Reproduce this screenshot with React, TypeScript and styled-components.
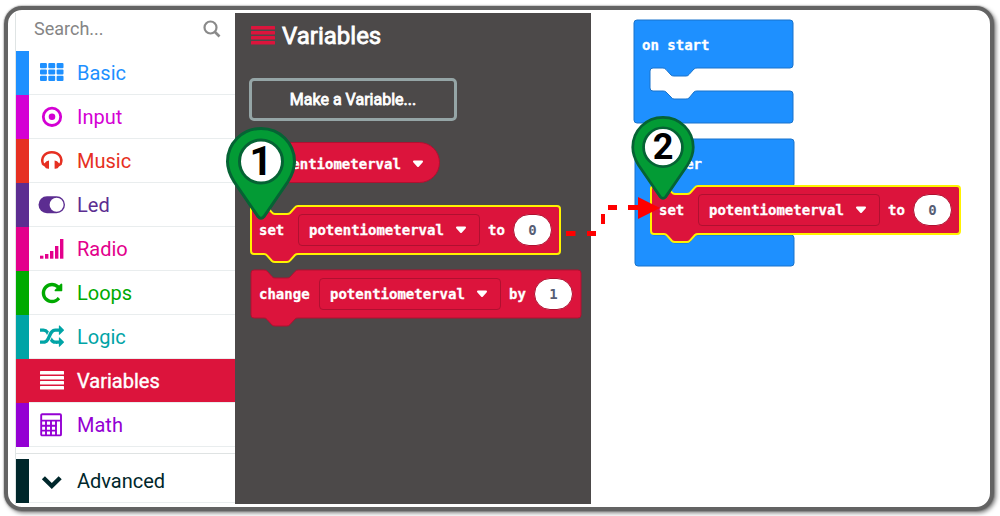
import React from "react";
import styled, { createGlobalStyle } from "styled-components";

const RED = "#dc143c";
const RED_DARK = "#b01030";
const BLUE = "#1e90ff";
const BLUE_DARK = "#1873cc";
const YELLOW = "#fff200";
const SANS = 'Roboto, "Liberation Sans", sans-serif';
const MONO = '"DejaVu Sans Mono", "Liberation Mono", monospace';

const GlobalStyle = createGlobalStyle`
  *, *::before, *::after { box-sizing: border-box; }
  body { margin: 0; background: #fff; font-family: ${SANS}; }
  button, input, select { font: inherit; margin: 0; }
`;

const Page = styled.div`
  padding: 6px 6px 5px 4px;
  min-height: 100vh;
  display: flex;
`;

const Frame = styled.div`
  position: relative;
  flex: 1;
  display: flex;
  padding: 3px 3px 3px 7px;
  border: 4px solid #636363;
  border-radius: 18px;
  background: #fff;
  box-shadow: 2px 2px 4px rgba(0, 0, 0, 0.5), 0 0 1px 1px rgba(0, 0, 0, 0.15);
`;

const Sidebar = styled.nav`
  flex: none;
  width: 220px;
  border-left: 1px solid #dfe4e4;
`;

const SearchRow = styled.label`
  display: flex;
  align-items: center;
  height: 38px;
  padding: 0 14px 7px 18px;
`;

const SearchInput = styled.input`
  flex: 1;
  min-width: 0;
  padding: 0;
  border: 0;
  outline: 0;
  background: transparent;
  font-size: 18px;
  color: #555;
  &::placeholder { color: #858585; opacity: 1; }
`;

const CategoryList = styled.ul`
  list-style: none;
  margin: 0;
  padding: 0;
`;

const AdvancedList = styled(CategoryList)`
  margin-top: 6px;
  padding-top: 5px;
  border-top: 1px solid #dfe3e3;
`;

const CategoryButton = styled.button<{ $color: string; $active?: boolean }>`
  display: flex;
  align-items: center;
  gap: 13px;
  width: 100%;
  height: 44px;
  padding: 0 0 0 11px;
  border: 0;
  border-left: 13px solid ${(p) => p.$color};
  background: ${(p) => (p.$active ? p.$color : "#fff")};
  box-shadow: inset 0 -1px 0 #e9edee;
  color: ${(p) => (p.$active ? "#fff" : p.$color)};
  font-size: 20px;
  line-height: 24px;
  text-align: left;
  -webkit-text-stroke: ${(p) => (p.$active ? "0.4px #fff" : "0")};
`;

const Icon = styled.svg`
  flex: none;
  width: 24px;
  height: 24px;
  overflow: visible;
`;

const Flyout = styled.section`
  flex: none;
  width: 356px;
  padding: 9px 0 0 14px;
  background: #4c4949;
`;

const FlyoutTitle = styled.h1`
  display: flex;
  align-items: center;
  gap: 7px;
  margin: 0 0 28px;
  padding-left: 2px;
  font-size: 24px;
  line-height: 28px;
  font-weight: 400;
  -webkit-text-stroke: 0.8px #fff;
  color: #fff;
`;

const MakeButton = styled.button`
  display: block;
  width: 208px;
  height: 43px;
  margin-bottom: 21px;
  padding: 0;
  border: 3px solid #95a5a6;
  border-radius: 5px;
  background: transparent;
  color: #fff;
  font-size: 16px;
  -webkit-text-stroke: 0.8px #fff;
`;

const Stack = styled.div`
  display: flex;
  flex-direction: column;
  align-items: flex-start;
  padding-left: 2px;
`;

const Reporter = styled.div`
  width: 189px;
  height: 41px;
  margin-bottom: 23px;
  border: 1px solid ${RED_DARK};
  border-radius: 21px;
  background: ${RED};
`;

const BlockRoot = styled.div`
  position: relative;
  display: flex;
  align-items: center;
  gap: 8px;
  height: 48px;
  padding: 0 8px;
  margin-bottom: 16px;
  font: bold 14px ${MONO};
  color: #fff;
  -webkit-text-stroke: 0.3px #fff;
`;

const Shape = styled.svg`
  position: absolute;
  left: 0;
  top: 0;
  overflow: visible;
`;

const Word = styled.span<{ $width: number }>`
  position: relative;
  width: ${(p) => p.$width}px;
  white-space: nowrap;
`;

const FieldBox = styled.label<{ $plain?: boolean }>`
  position: relative;
  display: block;
  width: ${(p) => (p.$plain ? "187px" : "182px")};
  height: ${(p) => (p.$plain ? "41px" : "32px")};
  border: ${(p) => (p.$plain ? "0" : `1px solid ${RED_DARK}`)};
  border-radius: 4px;
`;

const FieldSelect = styled.select<{ $plain?: boolean }>`
  appearance: none;
  width: 100%;
  height: 100%;
  padding: 0 0 0 ${(p) => (p.$plain ? 14 : 10)}px;
  border: 0;
  outline: 0;
  background: transparent;
  font: bold 14px ${MONO};
  color: #fff;
  -webkit-text-stroke: 0.3px #fff;
`;

const Caret = styled.svg<{ $plain?: boolean }>`
  position: absolute;
  right: ${(p) => (p.$plain ? 15 : 12)}px;
  top: calc(50% - 4px);
  pointer-events: none;
`;

const NumberInput = styled.input`
  position: relative;
  width: 39px;
  height: 32px;
  padding: 0;
  border: 1px solid ${RED_DARK};
  border-radius: 16px;
  background: #fff;
  color: #575e75;
  font: bold 14px ${MONO};
  -webkit-text-stroke: 0;
  text-align: center;
`;

const Workspace = styled.main`
  position: relative;
  flex: 1;
  min-width: 0;
  min-height: 491px;
`;

const Placed = styled.div<{ $x: number; $y: number }>`
  position: absolute;
  left: ${(p) => p.$x}px;
  top: ${(p) => p.$y}px;
`;

const EventTitle = styled.span`
  position: absolute;
  left: 8px;
  top: 15px;
  font: bold 14px/20px ${MONO};
  color: #fff;
  -webkit-text-stroke: 0.3px #fff;
  white-space: nowrap;
`;

const Overlay = styled(Placed)`
  pointer-events: none;
  line-height: 0;
`;

const GLYPHS = {
  repeat:
    "M1664 256v448q0 26-19 45t-45 19h-448q-42 0-59-40-17-39 14-69l138-138q-148-137-349-137-104 0-198.5 40.5t-163.5 109.5-109.5 163.5-40.5 198.5 40.5 198.5 109.5 163.5 163.5 109.5 198.5 40.5q119 0 225-52t179-147q7-10 23-12 15 0 25 9l137 138q9 8 9.5 20.5t-7.5 22.5q-109 132-264 204.5t-327 72.5q-156 0-298-61t-245-164-164-245-61-298 61-298 164-245 245-164 298-61q147 0 284.5 55.5t244.5 156.5l130-129q29-31 70-14 39 17 39 59z",
  shuffle:
    "M666 481q-60 92-137 273-22-45-37-72.5t-40.5-63.5-51-56.5-63-35-81.5-14.5h-224q-14 0-23-9t-9-23v-192q0-14 9-23t23-9h224q250 0 410 225zm1126 799q0 14-9 23l-320 320q-9 9-23 9-13 0-22.5-9.5t-9.5-22.5v-192q-32 0-85 .5t-81 1-73-1-71-5-64-10.5-63-18.5-58-28.5-59-40-55-53.5-56-69.5q59-93 136-273 22 45 37 72.5t40.5 63.5 51 56.5 63 35 81.5 14.5h256v-192q0-14 9-23t23-9q12 0 24 10l319 319q9 9 9 23zm0-896q0 14-9 23l-320 320q-9 9-23 9-13 0-22.5-9.5t-9.5-22.5v-192h-256q-48 0-87 15t-69 45-51 61.5-45 77.5q-32 62-78 171-29 66-49.5 111t-54 105-64 100-74 83-90 68.5-106.5 42-128 16.5h-224q-14 0-23-9t-9-23v-192q0-14 9-23t23-9h224q48 0 87-15t69-45 51-61.5 45-77.5q32-62 78-171 29-66 49.5-111t54-105 64-100 74-83 90-68.5 106.5-42 128-16.5h256v-192q0-14 9-23t23-9q12 0 24 10l319 319q9 9 9 23z",
};

const bars = [2, 7, 12, 17].map((y) => (
  <rect key={y} x="0" y={y} width="24" height="3.4" rx="0.5" />
));

const icons: Record<string, React.ReactNode> = {
  grid: [2, 8.4, 14.8].map((y) =>
    [0, 8.3, 16.6].map((x) => (
      <rect key={`${x}-${y}`} x={x} y={y} width="6.9" height="5.2" rx="1" />
    ))
  ),
  target: (
    <>
      <circle cx="12" cy="11.8" r="8.7" fill="none" stroke="currentColor" strokeWidth="2.8" />
      <circle cx="12" cy="11.8" r="3.3" />
    </>
  ),
  headphones: (
    <>
      <path
        d="M3.200 15.600C.2 8.500 5 3.300 11.800 3.300S23.400 8.500 20.400 15.600"
        fill="none"
        stroke="currentColor"
        strokeWidth="2.500"
      />
      <path d="M9 11.500v8.300q-3.400.3-4.400-2.200L1.800 15.800l3-1.800Q6.200 11.700 9 11.500z" />
      <path d="M14.600 11.500v8.300q3.400.3 4.400-2.200l2.800-1.800-3-1.800q-1.400-2.300-4.200-2.500z" />
    </>
  ),
  toggle: (
    <>
      <rect x="-1.5" y="3.3" width="26.5" height="17" rx="8.500" />
      <circle cx="16.6" cy="11.8" r="7" fill="#fff" />
    </>
  ),
  signal: (
    <>
      <rect x="0" y="18.7" width="3.4" height="3" />
      <rect x="5" y="17" width="3.4" height="4.7" />
      <rect x="10" y="14" width="3.4" height="7.7" />
      <rect x="15" y="9" width="3.4" height="12.7" />
      <rect x="20" y="2" width="3.4" height="19.7" />
    </>
  ),
  repeat: <path transform="scale(0.0134)" d={GLYPHS.repeat} />,
  shuffle: <path transform="scale(0.0134)" d={GLYPHS.shuffle} />,
  list: bars,
  calculator: (
    <>
      <rect x="1.2" y="1.2" width="19.800" height="21.200" rx="1" fill="none" stroke="currentColor" strokeWidth="1.9" />
      <path
        d="M1 7.600h20M1 12.700h15M1 17.600h15M6 7.600v14.500M11 7.600v14.500M16 7.600v14.500"
        fill="none"
        stroke="currentColor"
        strokeWidth="1.9"
      />
    </>
  ),
  chevron: (
    <path d="M3.400 8.800l8.400 8.200 8.400-8.200" fill="none" stroke="currentColor" strokeWidth="4.4" />
  ),
};

const categories = [
  { name: "Basic", color: BLUE, icon: "grid" },
  { name: "Input", color: "#d400d4", icon: "target" },
  { name: "Music", color: "#e63022", icon: "headphones" },
  { name: "Led", color: "#5c2d91", icon: "toggle" },
  { name: "Radio", color: "#e3008c", icon: "signal" },
  { name: "Loops", color: "#00aa00", icon: "repeat" },
  { name: "Logic", color: "#00a4a6", icon: "shuffle" },
  { name: "Variables", color: RED, icon: "list" },
  { name: "Math", color: "#9400d3", icon: "calculator" },
];

function Category({ name, color, icon }: { name: string; color: string; icon: string }) {
  return (
    <li>
      <CategoryButton type="button" $color={color} $active={name === "Variables"}>
        <Icon viewBox="0 0 24 24" fill="currentColor" aria-hidden="true">
          {icons[icon]}
        </Icon>
        {name}
      </CategoryButton>
    </li>
  );
}

function VariableField({ plain }: { plain?: boolean }) {
  return (
    <FieldBox $plain={plain}>
      <FieldSelect $plain={plain} aria-label="Variable">
        <option>potentiometerval</option>
      </FieldSelect>
      <Caret $plain={plain} width="12" height="8" viewBox="0 0 12 8" aria-hidden="true">
        <path
          d="M2 1.500h8L6 6z"
          fill="#fff"
          stroke="#fff"
          strokeWidth="2"
          strokeLinejoin="round"
        />
      </Caret>
    </FieldBox>
  );
}

// Top edge dips into a notch and the bottom edge carries the matching tab.
const statementPath = (w: number) =>
  `M0 3Q0 0 3 0H13Q15 0 16 1L21 6.500Q22 8 24 8H36Q38 8 39 7L44 1.500Q45 0 47 0H${w - 3}Q${w} 0 ${w} 3V45Q${w} 48 ${w - 3} 48H47Q45 48 44 49L39 54.500Q38 56 36 56H24Q22 56 21 55L16 49.500Q15 48 13 48H3Q0 48 0 45Z`;

type StatementProps = {
  verb: string;
  verbWidth: number;
  joiner: string;
  value: string;
  width: number;
  selected?: boolean;
};

function Statement({ verb, verbWidth, joiner, value, width, selected }: StatementProps) {
  return (
    <BlockRoot>
      <Shape width={width} height="56" aria-hidden="true">
        <path
          d={statementPath(width)}
          fill={RED}
          stroke={selected ? YELLOW : RED_DARK}
          strokeWidth={selected ? 2 : 1}
        />
      </Shape>
      <Word $width={verbWidth}>{verb}</Word>
      <VariableField />
      <Word $width={17}>{joiner}</Word>
      <NumberInput aria-label="Value" defaultValue={value} />
    </BlockRoot>
  );
}

// A C-shaped event block: header, an opening of the given height, and a foot.
function EventBlock({ title, gap, foot }: { title: string; gap: number; foot: number }) {
  const low = 48 + gap;
  const end = low + foot;
  const d =
    `M0 3Q0 0 3 0H156Q159 0 159 3V45Q159 48 156 48H63Q61 48 60 49L55 54.500Q54 56 52 56H40Q38 56 37 55L32 49.500Q31 48 29 48H19Q16 48 16 51` +
    `V${low - 3}Q16 ${low} 19 ${low}H29Q31 ${low} 32 ${low + 1}L37 ${low + 6}Q38 ${low + 8} 40 ${low + 8}H52Q54 ${low + 8} 55 ${low + 7}L60 ${low + 1}Q61 ${low} 63 ${low}` +
    `H156Q159 ${low} 159 ${low + 3}V${end - 3}Q159 ${end} 156 ${end}H3Q0 ${end} 0 ${end - 3}Z`;
  return (
    <>
      <Shape width="160" height={end} aria-hidden="true">
        <path d={d} fill={BLUE} stroke={BLUE_DARK} strokeWidth="1" />
      </Shape>
      <EventTitle>{title}</EventTitle>
    </>
  );
}

function Pin({ label, width, height }: { label: string; width: number; height: number }) {
  return (
    <svg width={width} height={height} viewBox="0 0 70 93" role="img" aria-label={`Step ${label}`}>
      <path
        d="M35 1.500C16 1.500 1.500 16.500 1.500 34.500c0 8 2.500 13.500 6.500 20L32 89.500q3 3.500 6 0L62 54.500c4-6.500 6.500-12 6.500-20C68.500 16.500 54 1.500 35 1.500z"
        fill="#039b35"
        stroke="#056334"
        strokeWidth="3"
      />
      <circle cx="35" cy="34.5" r="21.5" fill="#fff" stroke="#056334" strokeWidth="3" />
      <text
        x="35"
        y="48"
        textAnchor="middle"
        fontFamily="Roboto, sans-serif"
        fontWeight="700"
        fontSize="40"
        fill="#000"
      >
        {label}
      </text>
    </svg>
  );
}

export default function App() {
  return (
    <Page>
      <GlobalStyle />
      <Frame>
        <Sidebar>
          <SearchRow>
            <SearchInput type="text" placeholder="Search..." aria-label="Search" />
            <svg width="18" height="18" viewBox="0 0 18 18" fill="none" stroke="#8a8a8a" aria-hidden="true">
              <circle cx="7.5" cy="7.5" r="6" strokeWidth="2.2" />
              <path d="M12 12l4.500 4.500" strokeWidth="2.6" />
            </svg>
          </SearchRow>
          <CategoryList>
            {categories.map((c) => (
              <Category key={c.name} {...c} />
            ))}
          </CategoryList>
          <AdvancedList>
            <Category name="Advanced" color="#00272b" icon="chevron" />
          </AdvancedList>
        </Sidebar>

        <Flyout>
          <FlyoutTitle>
            <Icon viewBox="0 0 24 24" fill={RED} aria-hidden="true">
              {bars}
            </Icon>
            Variables
          </FlyoutTitle>
          <MakeButton type="button">Make a Variable...</MakeButton>
          <Stack>
            <Reporter>
              <VariableField plain />
            </Reporter>
            <Statement verb="set" verbWidth={31} joiner="to" value="0" width={309} selected />
            <Statement verb="change" verbWidth={52} joiner="by" value="1" width={330} />
          </Stack>
        </Flyout>

        <Workspace>
          <Placed $x={43} $y={7}>
            <EventBlock title="on start" gap={23} foot={32} />
          </Placed>
          <Placed $x={44} $y={126}>
            <EventBlock title="forever" gap={48} foot={31} />
          </Placed>
          <Placed $x={60} $y={173}>
            <Statement verb="set" verbWidth={31} joiner="to" value="0" width={309} selected />
          </Placed>
        </Workspace>

        <Overlay $x={558} $y={184}>
          <svg width="100" height="56" viewBox="0 0 100 56" fill="#f00" aria-hidden="true">
            <path d="M0 37h9.500v5H0zM21 37h9v5h-9zM35 20h4v10h-4zM42 11h9v5h-9zM62 11h11v5H62z" />
            <path d="M72 3l22 11-22 11z" />
          </svg>
        </Overlay>
        <Overlay $x={218} $y={117}>
          <Pin label="1" width={70} height={93} />
        </Overlay>
        <Overlay $x={623} $y={106}>
          <Pin label="2" width={64} height={84} />
        </Overlay>
      </Frame>
    </Page>
  );
}
